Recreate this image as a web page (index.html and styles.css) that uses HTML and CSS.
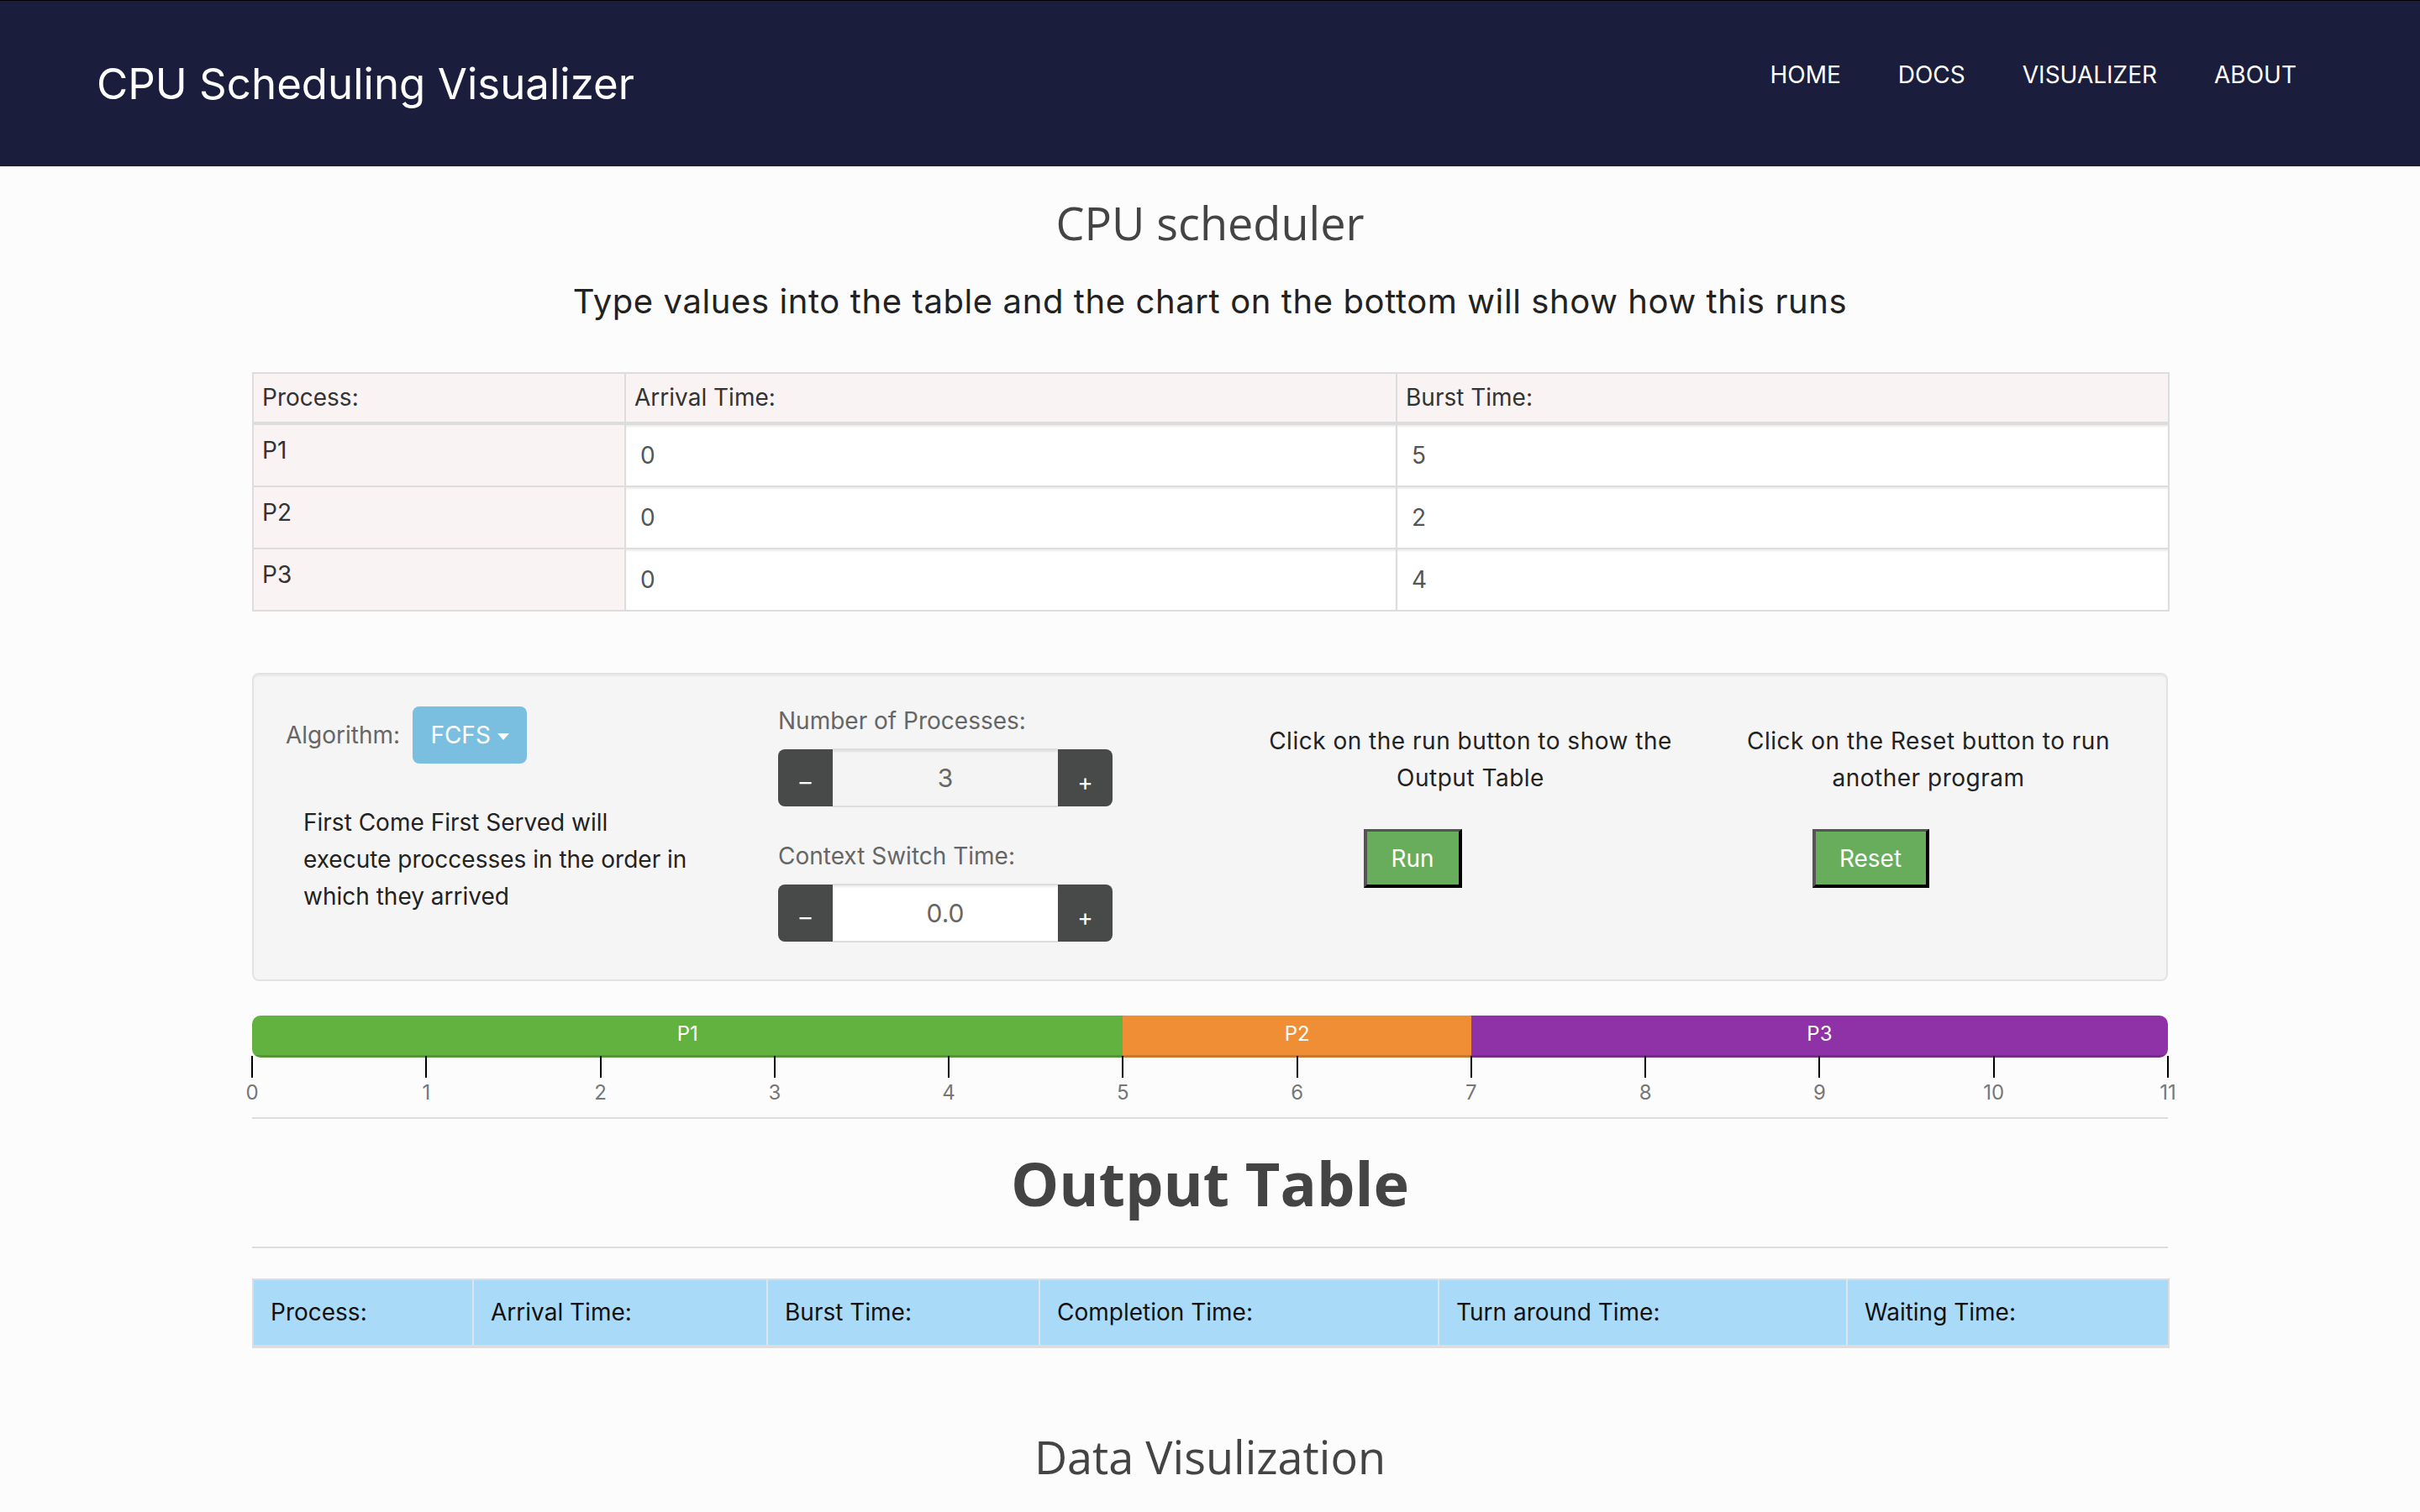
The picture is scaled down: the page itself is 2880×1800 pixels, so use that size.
FILE: index.html
```html
<!DOCTYPE html>
<html lang="en">
<head>
<meta charset="utf-8">
<title>CPU Scheduling Visualizer</title>
<link rel="stylesheet" href="styles.css">
</head>
<body>
<header class="navbar">
  <div class="brand">CPU Scheduling Visualizer</div>
  <nav class="nav">
    <a href="#">HOME</a>
    <a href="#">DOCS</a>
    <a href="#">VISUALIZER</a>
    <a href="#">ABOUT</a>
  </nav>
</header>

<main class="container">
  <h2 class="page-title">CPU scheduler</h2>
  <h4 class="subtitle">Type values into the table and the chart on the bottom will show how this runs</h4>

  <table class="input-table">
    <colgroup>
      <col class="c-proc"><col class="c-arr"><col class="c-burst">
    </colgroup>
    <thead>
      <tr><th>Process:</th><th>Arrival Time:</th><th>Burst Time:</th></tr>
    </thead>
    <tbody>
      <tr><td class="proc-cell">P1</td><td class="val-cell"><input type="text" value="0"></td><td class="val-cell"><input type="text" value="5"></td></tr>
      <tr><td class="proc-cell">P2</td><td class="val-cell"><input type="text" value="0"></td><td class="val-cell"><input type="text" value="2"></td></tr>
      <tr><td class="proc-cell">P3</td><td class="val-cell"><input type="text" value="0"></td><td class="val-cell"><input type="text" value="4"></td></tr>
    </tbody>
  </table>

  <section class="well">
    <div class="col col-algo">
      <div class="algo-row">
        <span class="algo-label">Algorithm:</span>
        <button class="btn-algo" type="button">FCFS<span class="caret"></span></button>
      </div>
      <p class="algo-desc">First Come First Served will<br>execute proccesses in the order in<br>which they arrived</p>
    </div>
    <div class="col col-fields">
      <div class="field-label">Number of Processes:</div>
      <div class="spinner">
        <button class="spin-btn minus" type="button">–</button>
        <input class="spin-input readonly" type="text" value="3" readonly>
        <button class="spin-btn plus" type="button">+</button>
      </div>
      <div class="field-label second">Context Switch Time:</div>
      <div class="spinner">
        <button class="spin-btn minus" type="button">–</button>
        <input class="spin-input" type="text" value="0.0">
        <button class="spin-btn plus" type="button">+</button>
      </div>
    </div>
    <div class="col col-action col-run">
      <p class="action-text">Click on the run button to show the<br>Output Table</p>
      <button class="btn-go" type="button">Run</button>
    </div>
    <div class="col col-action col-reset">
      <p class="action-text">Click on the Reset button to run<br>another program</p>
      <button class="btn-go" type="button">Reset</button>
    </div>
  </section>

  <section class="gantt">
    <div class="gantt-bar">
      <div class="seg seg-p1" style="width: 45.4545%">P1</div>
      <div class="seg seg-p2" style="width: 18.1818%">P2</div>
      <div class="seg seg-p3" style="width: 36.3636%">P3</div>
    </div>
    <div class="axis">
      <div class="tick"><span class="tick-line"></span><span class="tick-label">0</span></div>
      <div class="tick"><span class="tick-line"></span><span class="tick-label">1</span></div>
      <div class="tick"><span class="tick-line"></span><span class="tick-label">2</span></div>
      <div class="tick"><span class="tick-line"></span><span class="tick-label">3</span></div>
      <div class="tick"><span class="tick-line"></span><span class="tick-label">4</span></div>
      <div class="tick"><span class="tick-line"></span><span class="tick-label">5</span></div>
      <div class="tick"><span class="tick-line"></span><span class="tick-label">6</span></div>
      <div class="tick"><span class="tick-line"></span><span class="tick-label">7</span></div>
      <div class="tick"><span class="tick-line"></span><span class="tick-label">8</span></div>
      <div class="tick"><span class="tick-line"></span><span class="tick-label">9</span></div>
      <div class="tick"><span class="tick-line"></span><span class="tick-label">10</span></div>
      <div class="tick"><span class="tick-line"></span><span class="tick-label">11</span></div>
    </div>
  </section>

  <hr class="rule rule-gantt">
  <h1 class="output-title">Output Table</h1>
  <hr class="rule rule-output">

  <table class="output-table">
    <colgroup>
      <col class="o1"><col class="o2"><col class="o3"><col class="o4"><col class="o5"><col class="o6">
    </colgroup>
    <thead>
      <tr>
        <th>Process:</th>
        <th>Arrival Time:</th>
        <th>Burst Time:</th>
        <th>Completion Time:</th>
        <th>Turn around Time:</th>
        <th>Waiting Time:</th>
      </tr>
    </thead>
  </table>

  <h2 class="viz-title">Data Visulization</h2>
</main>
</body>
</html>
```

FILE: styles.css
```css
* {
  box-sizing: border-box;
}

body {
  margin: 0;
  background: #fcfcfc;
  font-family: Inter, "DejaVu Sans", sans-serif;
  color: #333;
}

/* ---------- navbar ---------- */
.navbar {
  height: 198px;
  background: #1a1d3b;
  border-top: 1px solid #000;
  display: flex;
  align-items: center;
  justify-content: space-between;
  padding: 0 147px 0 115px;
}

.brand {
  color: #fff;
  font-size: 51px;
  line-height: 60px;
}

.nav {
  display: flex;
  gap: 68px;
  margin-bottom: 21px;
}

.nav a {
  color: #fff;
  font-size: 28px;
  line-height: 40px;
  text-decoration: none;
}

/* ---------- main ---------- */
.container {
  width: 2280px;
  margin: 0 auto;
}

.page-title {
  font-family: "Open Sans", sans-serif;
  font-weight: 400;
  font-size: 54px;
  line-height: 60px;
  color: #444;
  text-align: center;
  margin: 37px 0 0;
}

.subtitle {
  font-size: 40px;
  line-height: 50px;
  letter-spacing: 0.6px;
  font-weight: 400;
  color: #222;
  text-align: center;
  margin: 39px 0 59px;
}

/* ---------- input table ---------- */
.input-table {
  width: 100%;
  table-layout: fixed;
  border-collapse: collapse;
  border: 2px solid #ddd;
}

.c-proc { width: 443px; }
.c-arr { width: 918px; }
.c-burst { width: 919px; }

.input-table th {
  background: #f9f3f3;
  text-align: left;
  font-weight: 400;
  font-size: 28px;
  line-height: 40px;
  padding: 8px 10px 9px;
  border: 2px solid #ddd;
  border-bottom-width: 4px;
  color: #333;
}

.input-table td {
  border: 2px solid #ddd;
}

.proc-cell {
  background: #f9f3f3;
  padding: 10px 10px;
  vertical-align: top;
  font-size: 28px;
  line-height: 40px;
  color: #333;
}

.val-cell {
  padding: 0;
  background: #fff;
}

.val-cell input {
  display: block;
  width: 100%;
  height: 72px;
  border: 0;
  padding: 0 17px;
  font-family: Inter, "DejaVu Sans", sans-serif;
  font-size: 28px;
  color: #555;
  background: transparent;
  box-shadow: inset 0 2px 2px rgba(0, 0, 0, 0.075);
  outline: none;
}

/* ---------- control well ---------- */
.well {
  margin-top: 73px;
  height: 367px;
  background: #f5f5f5;
  border: 2px solid #e3e3e3;
  border-radius: 8px;
  box-shadow: inset 0 2px 2px rgba(0, 0, 0, 0.05);
  display: grid;
  grid-template-columns: 602px 567px 558px 532px;
  align-items: start;
}

.col-algo {
  padding: 38px 0 0 38px;
}

.algo-row {
  display: flex;
  align-items: center;
  gap: 15px;
}

.algo-label {
  font-size: 28px;
  line-height: 44px;
  color: #666;
}

.btn-algo {
  width: 136px;
  height: 68px;
  background: #7abfdf;
  color: #fff;
  border: 0;
  border-radius: 8px;
  font-family: Inter, "DejaVu Sans", sans-serif;
  font-size: 28px;
  display: flex;
  align-items: center;
  justify-content: center;
  gap: 8px;
  padding: 0;
}

.caret {
  width: 0;
  height: 0;
  border-top: 8px solid #fff;
  border-left: 7px solid transparent;
  border-right: 7px solid transparent;
  margin-top: 4px;
}

.algo-desc {
  margin: 48px 0 0 21px;
  font-size: 28px;
  line-height: 44px;
  color: #222;
}

.col-fields {
  padding: 33px 0 0 22px;
}

.field-label {
  font-size: 28px;
  line-height: 44px;
  color: #666;
  margin-bottom: 11px;
}

.field-label.second {
  margin-top: 36px;
}

.spinner {
  display: flex;
  align-items: center;
  width: 398px;
  height: 70px;
}

.spin-btn {
  width: 65px;
  height: 68px;
  flex: none;
  background: #484a4a;
  color: #fff;
  border: 0;
  font-family: Inter, "DejaVu Sans", sans-serif;
  font-size: 28px;
  padding: 10px 0 0;
}

.spin-btn.minus {
  border-radius: 8px 0 0 8px;
}

.spin-btn.plus {
  border-radius: 0 8px 8px 0;
}

.spin-input {
  flex: 1;
  min-width: 0;
  height: 70px;
  border: 0;
  border-top: 2px solid #ddd;
  border-bottom: 2px solid #ddd;
  text-align: center;
  font-family: Inter, "DejaVu Sans", sans-serif;
  font-size: 30px;
  color: #666;
  background: #fff;
  box-shadow: inset 0 2px 2px rgba(0, 0, 0, 0.075);
  outline: none;
}

.spin-input.readonly {
  background: #f4f4f4;
}

.col-action {
  padding-top: 57px;
  text-align: center;
}

.action-text {
  margin: 0;
  font-size: 28px;
  line-height: 44px;
  letter-spacing: 0.5px;
  color: #222;
}

.btn-go {
  margin: 39px 138px 0 0;
  height: 70px;
  padding: 0 22px;
  background: #68ad5b;
  color: #fff;
  font-family: Inter, "DejaVu Sans", sans-serif;
  font-size: 28px;
  border-style: solid;
  border-width: 3px 4px 4px 4px;
  border-color: #555 #000 #000 #555;
}

.col-run .btn-go {
  width: 117px;
}

.col-reset .btn-go {
  width: 139px;
}

/* ---------- gantt ---------- */
.gantt {
  margin-top: 41px;
}

.gantt-bar {
  display: flex;
  height: 50px;
  border-radius: 10px;
  overflow: hidden;
}

.seg {
  color: #fff;
  text-align: center;
  font-size: 24px;
  line-height: 44px;
  box-shadow: inset 0 -3px 0 rgba(0, 0, 0, 0.15);
}

.seg-p1 { background: #62b23f; }
.seg-p2 { background: #ef8e35; }
.seg-p3 { background: #8f31a7; }

.axis {
  display: flex;
  justify-content: space-between;
  margin-top: -2px;
}

.tick {
  width: 0;
  display: flex;
  flex-direction: column;
  align-items: center;
}

.tick-line {
  display: block;
  width: 2px;
  height: 26px;
  background: #000;
  flex: none;
}

.tick-label {
  margin-top: 3px;
  font-size: 24px;
  line-height: 30px;
  color: #777;
  white-space: nowrap;
}

/* ---------- output ---------- */
.rule {
  border: 0;
  border-top: 2px solid #ddd;
  height: 0;
}

.rule-gantt {
  margin: 14px 0 0;
}

.output-title {
  font-family: "Open Sans", sans-serif;
  font-weight: 700;
  font-size: 72px;
  line-height: 80px;
  color: #444;
  text-align: center;
  margin: 36px 0 0;
}

.rule-output {
  margin: 36px 0 0;
}

.output-table {
  margin-top: 36px;
  width: 100%;
  table-layout: fixed;
  border-collapse: collapse;
  border-top: 2px solid #ddd;
}

.o1 { width: 262px; }
.o2 { width: 350px; }
.o3 { width: 324px; }
.o4 { width: 475px; }
.o5 { width: 486px; }
.o6 { width: 383px; }

.output-table th {
  background: #a9dbf9;
  text-align: left;
  font-weight: 400;
  font-size: 28px;
  line-height: 41px;
  padding: 18px 20px;
  color: #111;
  border-left: 2px solid #dbe5eb;
  border-bottom: 4px solid #ddd;
}

.output-table th:first-child {
  border-left: 2px solid #ddd;
}

.output-table th:last-child {
  border-right: 2px solid #ddd;
}

.viz-title {
  font-family: "Open Sans", sans-serif;
  font-weight: 400;
  font-size: 54px;
  line-height: 60px;
  color: #444;
  text-align: center;
  margin: 99px 0 0;
}
```
